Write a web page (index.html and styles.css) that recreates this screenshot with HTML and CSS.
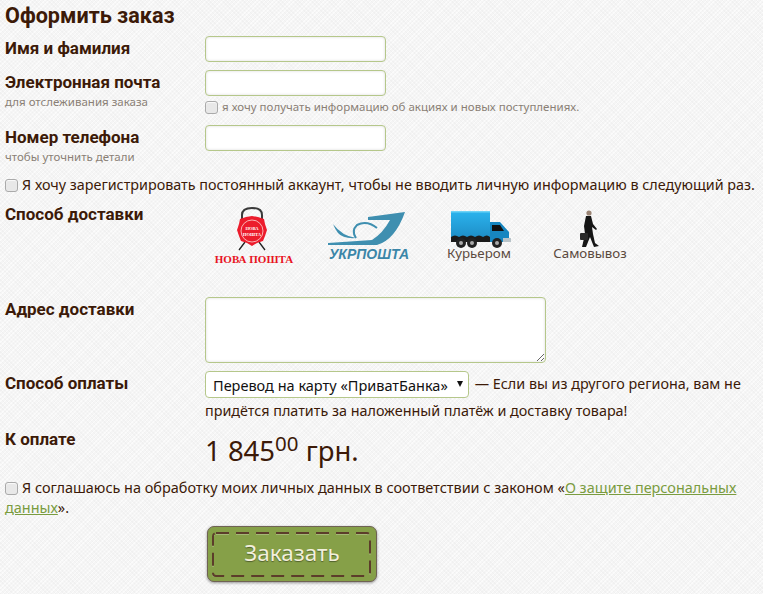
FILE: index.html
```html
<!DOCTYPE html>
<html lang="ru">
<head>
<meta charset="utf-8">
<title>Оформить заказ</title>
<link rel="stylesheet" href="styles.css">
</head>
<body>
<form class="order">
  <h1 class="title">Оформить заказ</h1>
  <div class="row row-name">
    <div class="label-col"><label class="label">Имя и фамилия</label></div>
    <div class="field-col"><input class="input" type="text"></div>
  </div>
  <div class="row row-mail">
    <div class="label-col"><label class="label">Электронная почта</label><div class="hint">для отслеживания заказа</div></div>
    <div class="field-col">
      <input class="input" type="text">
      <label class="news"><span class="check check-small"></span>я хочу получать информацию об акциях и новых поступлениях.</label>
    </div>
  </div>
  <div class="row row-phone">
    <div class="label-col"><label class="label">Номер телефона</label><div class="hint">чтобы уточнить детали</div></div>
    <div class="field-col"><input class="input" type="text"></div>
  </div>
  <label class="line line-register"><span class="check"></span>Я хочу зарегистрировать постоянный аккаунт, чтобы не вводить личную информацию в следующий раз.</label>
  <div class="row row-delivery">
    <div class="label-col"><label class="label">Способ доставки</label></div>
    <div class="carriers">
      <div class="carrier carrier-nova">
        <svg width="82" height="60" viewBox="0 0 82 60">
          <path d="M29 15 V11 Q29 4 39 4 Q49 4 49 11 V15" fill="none" stroke="#3a3a3a" stroke-width="2"/>
          <path d="M32 38 L26 46 M46 38 L52 46" stroke="#222" stroke-width="1.3"/>
          <path d="M39 12 L45 13 L51 15 L52 20 L54 26 L52 32 L50 37 L44 39 L39 42 L34 39 L28 37 L26 32 L24 26 L26 20 L27 15 L33 13 Z" fill="#ec1c2c"/>
          <circle cx="39" cy="27" r="11" fill="none" stroke="#f9c4c4" stroke-width=".9"/>
          <text class="seal-text" x="39" y="25.5" text-anchor="middle">НОВА</text>
          <text class="seal-text" x="39" y="31.5" text-anchor="middle">ПОШТА</text>
          <text class="nova-text" x="41" y="59" text-anchor="middle">НОВА ПОШТА</text>
        </svg>
      </div>
      <div class="carrier carrier-ukr">
        <svg width="84" height="50" viewBox="0 0 84 50">
          <path d="M1 33 L50 33 Q68 28 78 0 L41 5 L41 8 L63 8 Q56 21 45 28 L1 31Z" fill="#3f8fb0"/>
          <path d="M29 26 Q24 19 30 13 Q40 8 50 16" fill="none" stroke="#3f8fb0" stroke-width="2"/>
          <path d="M6 12 Q15 24 29 26 Q16 27 11 21 Q8 17 6 12Z" fill="#3f8fb0"/>
          <text class="ukr-text" x="42" y="47" text-anchor="middle">УКРПОШТА</text>
        </svg>
      </div>
      <div class="carrier carrier-truck">
        <svg width="60" height="37" viewBox="0 0 60 37">
          <defs>
            <linearGradient id="truck-body" x1="0" y1="0" x2="0" y2="1">
              <stop offset="0" stop-color="#2bb4ee"/>
              <stop offset="1" stop-color="#1e8fc8"/>
            </linearGradient>
          </defs>
          <rect x="0" y="0" width="39" height="26" fill="url(#truck-body)"/>
          <rect x="0" y="0" width="39" height="1.5" fill="#6fd3f6"/>
          <path d="M0 26 q4 -3 8 0 q4 -3 8 0 q4 -3 8 0 q4 -3 8 0 q4 -3 7 0 V31 H0Z" fill="#1b1b1b"/>
          <path d="M39 11 H49 L58 21 V31 H39Z" fill="#1786c0"/>
          <path d="M41 14 H49 L53 20 H41Z" fill="#111"/>
          <rect x="52" y="27" width="8" height="4" fill="#b9c4c9"/>
          <circle cx="10" cy="32" r="5" fill="#222"/><circle cx="10" cy="32" r="2" fill="#aaa"/>
          <circle cx="21" cy="32" r="5" fill="#222"/><circle cx="21" cy="32" r="2" fill="#aaa"/>
          <circle cx="46" cy="32" r="5" fill="#222"/><circle cx="46" cy="32" r="2" fill="#aaa"/>
        </svg>
        <span class="carrier-name">Курьером</span>
      </div>
      <div class="carrier carrier-self">
        <svg width="20" height="38" viewBox="0 0 20 38">
          <circle cx="9" cy="3" r="2.6" fill="#9a8474"/>
          <path d="M6 6 H11 L13 14 L17 19 L16 20 L12 17 L13 24 L15 33 L19 36 L14 37 L10 27 L6 37 H2 L5 24 L4 16 Z" fill="#151515"/>
          <rect x="0" y="23" width="8" height="7" rx="1" fill="#2a2a2a"/>
        </svg>
        <span class="carrier-name">Самовывоз</span>
      </div>
    </div>
  </div>
  <div class="row row-address">
    <div class="label-col"><label class="label">Адрес доставки</label></div>
    <div class="field-col"><textarea class="area"></textarea></div>
  </div>
  <div class="row row-pay">
    <div class="label-col"><label class="label">Способ оплаты</label></div>
    <div class="pay-text">
      <span class="select-wrap"><select class="select"><option>Перевод на карту «ПриватБанка»</option></select></span>
      <span class="pay-note">— Если вы из другого региона, вам не придётся платить за наложенный платёж и доставку товара!</span>
    </div>
  </div>
  <div class="row row-total">
    <div class="label-col"><label class="label">К оплате</label></div>
    <div class="price">1 845<sup class="cents">00</sup> грн.</div>
  </div>
  <label class="line line-agree"><span class="check"></span>Я соглашаюсь на обработку моих личных данных в соответствии с законом «<a class="law" href="#">О защите персональных данных</a>».</label>
  <div class="row row-submit">
    <button class="submit" type="button">
      <svg class="stitch" width="159" height="45" viewBox="0 0 159 45">
        <rect x="1" y="2" width="157" height="43" rx="3" fill="none" stroke="#fff" stroke-opacity=".25" stroke-width="2" stroke-dasharray="13 7"/>
        <rect x="1" y="1" width="157" height="43" rx="3" fill="none" stroke="#5c3d2a" stroke-width="2" stroke-dasharray="13 7"/>
      </svg>
      Заказать
    </button>
  </div>
</form>
</body>
</html>
```
FILE: styles.css
```css
* { box-sizing: border-box; }
html, body { height: 100%; }
body {
  margin: 0;
  overflow: hidden;
  background-color: #f5f5f5;
  background-image:
    repeating-linear-gradient(45deg, rgba(0,0,0,.018) 0 1px, transparent 1px 3px),
    repeating-linear-gradient(-45deg, rgba(255,255,255,.6) 0 1px, transparent 1px 3px);
  color: #3c1a08;
  font-family: "Noto Sans", "Open Sans", sans-serif;
  font-size: 14.35px;
}
.order { padding: 3px 0 0 5px; width: 763px; }
.title { margin: 0 0 7px; font-family: Roboto, sans-serif; font-size: 21.6px; line-height: 26px; font-weight: 700; }
.row { display: flex; }
.label-col { width: 200px; flex: none; }
.label { display: block; font-family: Roboto, sans-serif; font-size: 17px; font-weight: 700; line-height: 24px; }
.hint { margin-top: 1px; font-size: 11.5px; line-height: 14px; color: #8a7f75; }
.input {
  display: block; width: 181px; height: 26px;
  border: 1px solid #b5c78a; border-radius: 4px; background: #fff;
  box-shadow: inset 0 0 3px rgba(0,0,0,.15);
}
.row-name { height: 34px; }
.row-mail { height: 55px; }
.row-phone { height: 50px; }
.news { display: flex; align-items: center; margin-top: 4px; font-size: 11.5px; line-height: 14px; color: #8a7f75; white-space: nowrap; }
.check {
  display: inline-block; flex: none; width: 13px; height: 13px; margin-right: 4px;
  border: 1px solid #aaa; border-radius: 3px; background: #e8e8e8;
  box-shadow: inset 0 1px 1px rgba(255,255,255,.8);
}
.line { display: block; line-height: 20px; }
.line .check { vertical-align: -2px; }
.line-register { white-space: nowrap; height: 27px; }
.row-delivery { height: 95px; }
.carriers { display: flex; }
.carrier { display: flex; flex-direction: column; align-items: center; }
.carrier-nova { width: 98px; padding-top: 2px; }
.carrier-ukr { width: 132px; padding-top: 10px; }
.carrier-truck { width: 88px; padding-top: 9px; }
.carrier-truck svg { margin-left: 4px; }
.carrier-self { width: 134px; padding-top: 8px; }
.carrier-name { font-size: 13.3px; line-height: 16px; color: #5b4a3e; margin-top: -3px; }
.seal-text { font: 700 4.6px "Liberation Serif", serif; fill: #fff; }
.nova-text { font: 700 11px "Liberation Serif", serif; fill: #e8141f; }
.ukr-text { font: italic 700 14px "Liberation Sans", sans-serif; fill: #3a86a8; }
.area {
  display: block; width: 341px; height: 66px;
  border: 1px solid #b5c78a; border-radius: 4px; background: #fff;
  box-shadow: inset 0 0 3px rgba(0,0,0,.15);
}
.row-address { height: 74px; }
.row-pay { height: 56px; }
.pay-text { width: 545px; line-height: 26px; }
.select-wrap { position: relative; display: inline-block; vertical-align: top; margin-right: 2px; }
.select-wrap::after {
  content: ""; position: absolute; right: 6px; top: 10px;
  border-style: solid; border-width: 6px 3.5px 0; border-color: #111 transparent transparent;
  pointer-events: none;
}
.select {
  display: block; appearance: none; -webkit-appearance: none;
  height: 27px; width: 264px;
  border: 1px solid #b5c78a; border-radius: 4px; background: #fff;
  color: #111; font: 14.5px "Noto Sans", sans-serif;
  padding-left: 7px;
}
.row-total { height: 51px; }
.price { font-size: 27.5px; line-height: 36px; margin-top: 6px; }
.cents { font-size: 20.5px; line-height: 0; vertical-align: 10px; }
.line-agree { width: 745px; font-size: 14.45px; }
.law { color: #7a9c3f; }
.row-submit { padding: 8px 0 0 202px; }
.submit {
  position: relative;
  width: 170px; height: 56px; padding: 0 0 3px;
  background: #86a048; border: 1px solid #6f6254; border-radius: 7px;
  box-shadow: 0 1px 3px rgba(0,0,0,.4);
  color: #f2efdc; font: 22.5px "Noto Sans", sans-serif;
  text-shadow: 0 1px 1px rgba(0,0,0,.4);
  cursor: pointer;
}
.stitch { position: absolute; left: 4px; top: 5px; }
```
